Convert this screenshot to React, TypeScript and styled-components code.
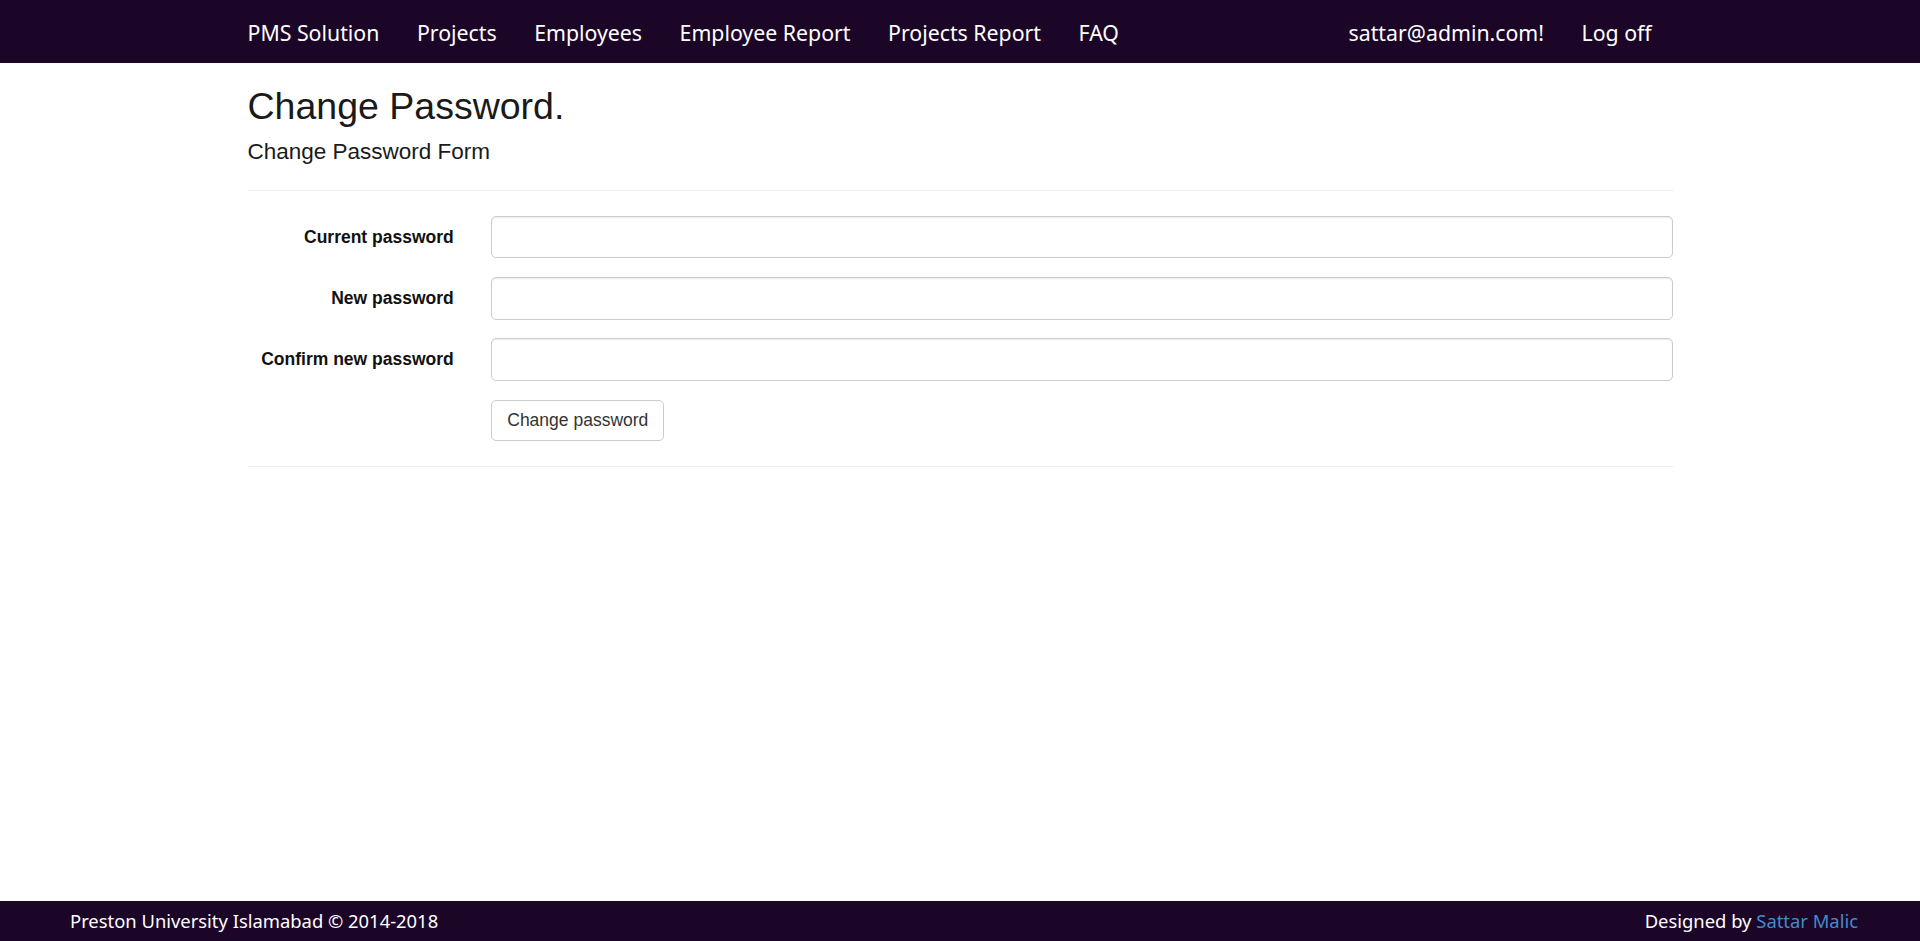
import React from "react";
import styled, { createGlobalStyle } from "styled-components";

const Global = createGlobalStyle`
  html, body { margin: 0; padding: 0; background: #fff; }
  body {
    font-family: "Liberation Sans", Arial, sans-serif;
    font-size: 17.5px;
    line-height: 1.42857;
    color: #333;
  }
  * { box-sizing: border-box; }
`;

const Page = styled.div`
  min-height: 941px;
  display: flex;
  flex-direction: column;
`;

const NavBar = styled.nav`
  height: 62.5px;
  background: #1c0628;
  flex-shrink: 0;
`;

const NavInner = styled.div`
  width: 1462.5px;
  margin: 0 auto;
  height: 100%;
  display: flex;
  align-items: center;
`;

const NavList = styled.ul<{ $right?: boolean }>`
  list-style: none;
  margin: 0;
  padding: 0;
  display: flex;
  height: 100%;
  margin-left: ${(p) => (p.$right ? "auto" : "0")};
  margin-right: ${(p) => (p.$right ? "20.75px" : "0")};
`;

const NavLink = styled.a`
  display: flex;
  align-items: center;
  height: 100%;
  padding: 3px 18.75px 0;
  color: #fff;
  text-decoration: none;
  font-family: "Trebuchet MS", "Noto Sans", sans-serif;
  font-size: 21.3px;
`;

const Main = styled.main`
  flex: 1;
  width: 1462.5px;
  margin: 0 auto;
  padding: 0 18.75px;
`;

const Title = styled.h2`
  font-family: "Liberation Sans", Arial, sans-serif;
  font-size: 37.5px;
  font-weight: 500;
  line-height: 1.1;
  margin: 23.75px 0 12.5px;
  color: #1a1a1a;
`;

const Subtitle = styled.h4`
  font-family: "Liberation Sans", Arial, sans-serif;
  font-size: 22.5px;
  font-weight: 500;
  line-height: 1.1;
  margin: 12.5px 0 8.75px;
  color: #1a1a1a;
`;

const Rule = styled.hr`
  border: 0;
  border-top: 1.25px solid #eee;
  margin: 25px 0 25px;
`;

const Form = styled.form`
  margin: 0 -18.75px;
`;

const FormGroup = styled.div`
  display: grid;
  grid-template-columns: 243.75px 1fr;
  margin-bottom: 18.75px;
`;

const Label = styled.label`
  text-align: right;
  font-weight: 700;
  padding: 8.75px 18.75px 0;
  color: #111;
  font-size: 17.5px;
`;

const Field = styled.div`
  padding: 0 18.75px;
`;

const Input = styled.input`
  display: block;
  width: 100%;
  height: 42.5px;
  padding: 7.5px 15px;
  font-size: 17.5px;
  color: #555;
  background: #fff;
  border: 1.25px solid #ccc;
  border-radius: 5px;
  box-shadow: inset 0 1.25px 1.25px rgba(0, 0, 0, 0.075);
  outline: none;
`;

const Button = styled.button`
  display: inline-block;
  padding: 7.5px 15px;
  font-family: "Liberation Sans", Arial, sans-serif;
  font-size: 17.5px;
  line-height: 1.42857;
  color: #333;
  background: #fff;
  border: 1.25px solid #ccc;
  border-radius: 5px;
  cursor: pointer;
`;

const Footer = styled.footer`
  height: 40px;
  background: #1c0628;
  display: flex;
  align-items: center;
  justify-content: space-between;
  padding: 0 62px 0 70px;
  font-family: "Trebuchet MS", "Noto Sans", sans-serif;
  font-size: 18.4px;
  color: #fff;
  flex-shrink: 0;
`;

const FooterLink = styled.a`
  color: #428bca;
  text-decoration: none;
`;

const navLeft = ["PMS Solution", "Projects", "Employees", "Employee Report", "Projects Report", "FAQ"];
const navRight = ["sattar@admin.com!", "Log off"];
const fields = [
  { id: "cur", label: "Current password" },
  { id: "new", label: "New password" },
  { id: "conf", label: "Confirm new password" },
];

export default function App() {
  return (
    <Page>
      <Global />
      <NavBar>
        <NavInner>
          <NavList>
            {navLeft.map((t) => (
              <li key={t}>
                <NavLink href="#">{t}</NavLink>
              </li>
            ))}
          </NavList>
          <NavList $right>
            {navRight.map((t) => (
              <li key={t}>
                <NavLink href="#">{t}</NavLink>
              </li>
            ))}
          </NavList>
        </NavInner>
      </NavBar>
      <Main>
        <Title>Change Password.</Title>
        <Subtitle>Change Password Form</Subtitle>
        <Rule />
        <Form onSubmit={(e) => e.preventDefault()}>
          {fields.map((f) => (
            <FormGroup key={f.id}>
              <Label htmlFor={f.id}>{f.label}</Label>
              <Field>
                <Input id={f.id} type="password" />
              </Field>
            </FormGroup>
          ))}
          <FormGroup>
            <div />
            <Field>
              <Button type="submit">Change password</Button>
            </Field>
          </FormGroup>
        </Form>
        <Rule />
      </Main>
      <Footer>
        <span>Preston University Islamabad © 2014-2018</span>
        <span>
          Designed by <FooterLink href="#">Sattar Malic</FooterLink>
        </span>
      </Footer>
    </Page>
  );
}
